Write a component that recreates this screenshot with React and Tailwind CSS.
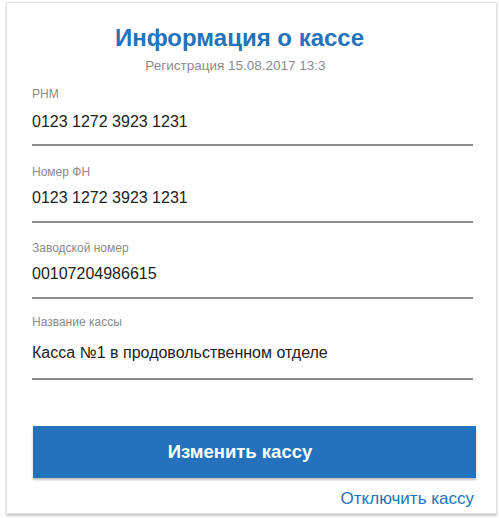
import React from "react";

const fields = [
  { label: "РНМ", value: "0123 1272 3923 1231", wrap: "mt-[13px]", box: "h-[45px] pt-[9px]" },
  { label: "Номер ФН", value: "0123 1272 3923 1231", wrap: "mt-[19px]", box: "h-[44px] pt-[7px]" },
  { label: "Заводской номер", value: "00107204986615", wrap: "mt-[18px]", box: "h-[44px] pt-[7px]" },
  { label: "Название кассы", value: "Касса №1 в продовольственном отделе", wrap: "mt-[16px]", box: "h-[51px] pt-[12px]" },
];

export default function App() {
  return (
    <div className="w-[499px] h-[518px] bg-white pl-[6px] pt-[2px]" style={{ fontFamily: '"Liberation Sans", Arial, sans-serif' }}>
      <div className="w-[491px] h-[512px] bg-white border border-[#e4e4e4] shadow-[0_2px_2px_rgba(0,0,0,0.22)] pl-[25px] pr-[21px] pt-[21px]">
        <div className="pr-[28px] flex flex-col items-center">
          <div className="text-[24px] leading-[28px] font-bold text-[#2472ba]">Информация о кассе</div>
          <div className="mt-[6px] pr-[8px] text-[13.5px] leading-[16px] text-[#8a8a8a]">Регистрация 15.08.2017 13:3</div>
        </div>
        <div className="w-[441px]">
          {fields.map((f) => (
            <div key={f.label} className={f.wrap}>
              <div className="text-[12px] leading-[14px] text-[#8a8a8a]">{f.label}</div>
              <div className={`${f.box} border-b-2 border-[#8c8c8c] text-[16px] leading-[24px] text-[#222]`}>{f.value}</div>
            </div>
          ))}
        </div>
        <button className="mt-[46px] ml-px w-[443px] h-[52px] bg-[#2372bb] text-white text-[18.5px] font-bold shadow-[0_2px_2px_rgba(0,0,0,0.25)] pr-[29px]">
          Изменить кассу
        </button>
        <div className="mt-[11px] w-[442px] text-right text-[17px] leading-[20px] text-[#2472ba]">Отключить кассу</div>
      </div>
    </div>
  );
}
